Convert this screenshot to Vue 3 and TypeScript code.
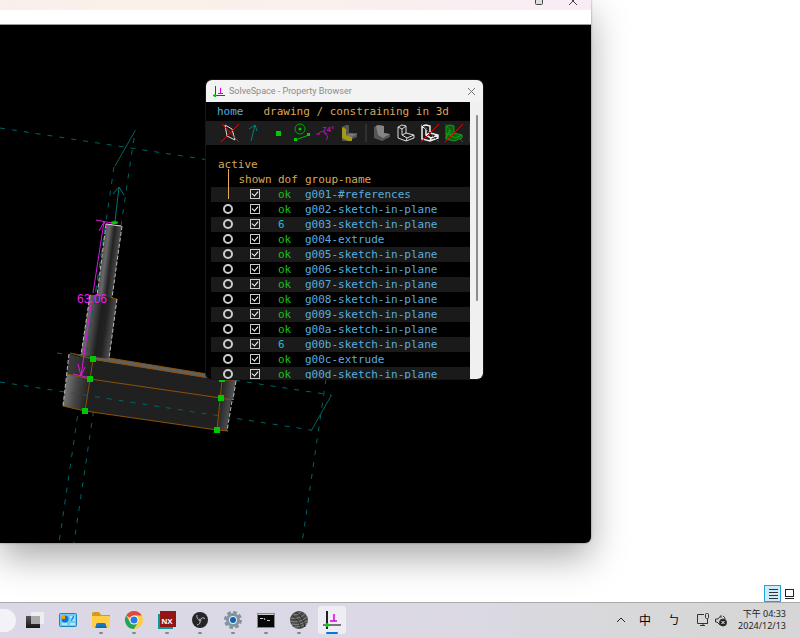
<script setup lang="ts">
import { ref } from 'vue'

interface Group {
  id: string
  dof: string
  shown: boolean
}

const groups = ref<Group[]>([
  { id: 'g001-#references', dof: 'ok', shown: true },
  { id: 'g002-sketch-in-plane', dof: 'ok', shown: true },
  { id: 'g003-sketch-in-plane', dof: '6', shown: true },
  { id: 'g004-extrude', dof: 'ok', shown: true },
  { id: 'g005-sketch-in-plane', dof: 'ok', shown: true },
  { id: 'g006-sketch-in-plane', dof: 'ok', shown: true },
  { id: 'g007-sketch-in-plane', dof: 'ok', shown: true },
  { id: 'g008-sketch-in-plane', dof: 'ok', shown: true },
  { id: 'g009-sketch-in-plane', dof: 'ok', shown: true },
  { id: 'g00a-sketch-in-plane', dof: 'ok', shown: true },
  { id: 'g00b-sketch-in-plane', dof: '6', shown: true },
  { id: 'g00c-extrude', dof: 'ok', shown: true },
  { id: 'g00d-sketch-in-plane', dof: 'ok', shown: true },
])

const active = ref('')

const handles: [number, number][] = [
  [93, 359],
  [90, 379],
  [85, 411],
  [222, 379],
  [221, 398],
  [217, 430],
]
</script>

<template>
  <div class="desktop">
    <main class="workspace">
      <section class="cad">
        <header class="cad-title">
          <button class="cap" aria-label="Maximize">
            <svg width="10" height="10" viewBox="0 0 10 10"><rect x="1.500" y="1.500" width="7" height="7" rx="1" fill="#ddd" stroke="#444" /></svg>
          </button>
          <button class="cap" aria-label="Close">
            <svg width="10" height="10" viewBox="0 0 10 10"><path d="M1 1L9 9M9 1L1 9" stroke="#444" /></svg>
          </button>
        </header>
        <div class="cad-menu"></div>
        <svg class="scene" viewBox="0 25 591 518" preserveAspectRatio="xMinYMin slice">
          <defs>
            <linearGradient id="shaftA" gradientUnits="userSpaceOnUse" x1="101" y1="260" x2="117" y2="262">
              <stop offset="0" stop-color="#505050" /><stop offset=".25" stop-color="#686868" />
              <stop offset=".6" stop-color="#222" /><stop offset="1" stop-color="#4c4c4c" />
            </linearGradient>
            <linearGradient id="shaftB" gradientUnits="userSpaceOnUse" x1="85" y1="326" x2="113" y2="330">
              <stop offset="0" stop-color="#6a6a6a" /><stop offset=".25" stop-color="#484848" />
              <stop offset=".5" stop-color="#1e1e1e" /><stop offset=".7" stop-color="#222" /><stop offset="1" stop-color="#505050" />
            </linearGradient>
            <linearGradient id="endTop" gradientUnits="userSpaceOnUse" x1="68" y1="362" x2="92" y2="366">
              <stop offset="0" stop-color="#3c3c3c" /><stop offset="1" stop-color="#222" />
            </linearGradient>
            <linearGradient id="endLow" gradientUnits="userSpaceOnUse" x1="64" y1="390" x2="88" y2="394">
              <stop offset="0" stop-color="#787878" /><stop offset=".5" stop-color="#454545" /><stop offset="1" stop-color="#222" />
            </linearGradient>
            <linearGradient id="endRight" gradientUnits="userSpaceOnUse" x1="219" y1="400" x2="233" y2="402">
              <stop offset="0" stop-color="#202020" /><stop offset="1" stop-color="#555" />
            </linearGradient>
          </defs>

          <g class="datum dashed">
            <path d="M0 128L300 174" />
            <path d="M57 353L331 395" />
            <path d="M326 379L302 543" />
            <path d="M114 167L59 543" />
            <path d="M134 138L74 543" />
          </g>
          <g class="datum">
            <path d="M135.500 130L115 166M331.500 395L311 431" />
          </g>

          <path d="M69 354L93 360L90 379L67 374Z" fill="url(#endTop)" />
          <path d="M67 374L90 379L85 411L63 406Z" fill="url(#endLow)" />
          <path d="M93 360L222 380L217 430L85 411Z" fill="#202020" />
          <path d="M222 379L236 380L233 400L231 400L227 431L217 430Z" fill="url(#endRight)" />
          <path d="M70 353L109 358L207 374L207 378L93 360Z" fill="#606060" />
          <path d="M70 353L96 357L93 360Z" fill="#333" />
          <path d="M90 295L117 299L109 359L81 355Z" fill="url(#shaftB)" />
          <path d="M106 224L122 226L112 298L97 296Z" fill="url(#shaftA)" />

          <path class="edge" d="M70 353L93 359L222 380H236M109 358L207 374M67 374L90 379L221 398L232 400M63 406L85 411L217 430L228 431M93 360L85 411M222 380L217 430M90 295L97 296M112 298L117 299" />
          <path class="rim" d="M106 224L97 296M122 226L112 298M117 299L109 359M90 295L81 355M69 354L63 406M236 381L233 400M232 401L227 431" />
          <path d="M106 224L121 226" stroke="#ddd" />
          <path class="datum dashed" d="M105 228L86 358M0 382L311 430" />
          <path class="datum arrow" d="M115 221L119 187M113 194L119 187L124 195" />

          <g class="dim">
            <path d="M96 220L112 223M104 222L93 293M99 231L104 222L108 229" />
            <path d="M91 305L81 376M78 364L81 376L85 367M73 374L91 378" />
            <text x="77" y="303">63.06</text>
          </g>
          <ellipse cx="114.500" cy="222.500" rx="3.500" ry="1.500" fill="#0c0" />
          <rect v-for="(p, i) in handles" :key="i" :x="p[0] - 3" :y="p[1] - 3" width="6" height="6" fill="#00c800" />
        </svg>
      </section>

      <div class="viewbar">
        <button class="view selected" aria-label="Details view">
          <svg width="16" height="16" viewBox="0 0 16 16"><path d="M4 3.500H13M4 6.500H13M4 9.500H13M4 12.500H13" stroke="#333" /></svg>
        </button>
        <button class="view" aria-label="Large icons view">
          <svg width="16" height="16" viewBox="0 0 16 16"><rect x="3.500" y="3.500" width="8" height="7" fill="#fff" stroke="#222" /><path d="M3 12.500H12" stroke="#222" /></svg>
        </button>
      </div>

      <section class="browser">
        <header class="browser-title">
          <svg width="13" height="13" viewBox="0 0 13 13">
            <path d="M3.500 1V12M1 10.500H13" stroke="#444" fill="none" />
            <path d="M8.500 3V8M6 8.500H11" stroke="#d0d" fill="none" /><circle cx="3" cy="10.500" r="1.500" fill="#0c0" />
          </svg>
          <span>SolveSpace - Property Browser</span>
          <button class="close" aria-label="Close browser">
            <svg width="9" height="9" viewBox="0 0 9 9"><path d="M1 1L8 8M8 1L1 8" stroke="#777" /></svg>
          </button>
        </header>
        <div class="browser-body">
          <div class="content">
            <nav class="crumbs">
              <a href="#home">home</a><span>drawing / constraining in 3d</span>
            </nav>
            <div class="tools">
              <button aria-label="Workplanes">
                <svg viewBox="0 0 24 24"><path d="M7 4L14 8L17 19L9 15Z" stroke="#ddd" /><path d="M3 21L21 3M4 3L21 21" class="cross" /></svg>
              </button>
              <button aria-label="Normals">
                <svg viewBox="0 0 24 24"><path d="M9 20L13 4M7 8L13 4L15 10" stroke="#007f7f" /></svg>
              </button>
              <button aria-label="Points">
                <svg viewBox="0 0 24 24"><rect x="10" y="10" width="5" height="5" fill="#0c0" /></svg>
              </button>
              <button aria-label="Construction">
                <svg viewBox="0 0 24 24"><circle cx="10" cy="8" r="5" stroke="#0a0" /><circle cx="10" cy="8" r="1.500" fill="#0c0" /><path d="M5 19L19 14" stroke="#0b0" /><rect x="4" y="17" width="3" height="3" fill="#0c0" /><rect x="17" y="12" width="3" height="3" fill="#0c0" /></svg>
              </button>
              <button aria-label="Constraints">
                <svg viewBox="0 0 24 24"><path d="M4 13Q8 8 13 13M10 12Q16 15 12 19M2 13H6" stroke="#c0c" /><text x="8" y="11" class="angle">74°</text></svg>
              </button>
              <button aria-label="Faces">
                <svg viewBox="0 0 24 24"><path d="M4 6L8 4H11V13L19 12V16L10 20H4Z" fill="#555" /><path d="M4 6L8 8V14L14 16V20H10L4 17Z" fill="#a39a10" /><path d="M8 14L12 12L19 13L14 16Z" fill="#777" /></svg>
              </button>
              <i class="split"></i>
              <button aria-label="Shaded">
                <svg viewBox="0 0 24 24"><path d="M4 6L8 4L14 5V12L20 13V16L12 20L4 17Z" fill="#555" /><path d="M6 5L8 4L14 5V12L20 13L13 17L8 14Z" fill="#858585" /></svg>
              </button>
              <button aria-label="Edges">
                <svg viewBox="0 0 24 24"><path d="M4 6L8 4L12 5V12L20 14V17L12 20L4 17ZM4 6L8 8V14L13 17L12 20M8 8L12 5M8 14L12 12M13 17L20 14" stroke="#ddd" /></svg>
              </button>
              <button aria-label="Mesh">
                <svg viewBox="0 0 24 24"><path class="heavy" d="M4 5L8 4L12 5V12L20 14V17L12 20L4 18ZM4 5L8 8V14L13 17L12 20M8 14L12 12M13 17L20 14" stroke="#eee" /><path d="M3 21L21 3M3 3L21 21" class="cross" /></svg>
              </button>
              <button aria-label="Hidden lines">
                <svg viewBox="0 0 24 24"><path d="M4 5L8 4L12 5V12L20 14V17L12 20L4 18Z" fill="#0a610a" /><path d="M4 5L8 4L12 5V12L20 14V17L12 20L4 18ZM4 5L8 8V14L13 17M4 18L8 8L12 12L8 14L4 12M13 17L20 14" stroke="#14a014" /><path d="M3 21L21 3M3 3L21 21" class="cross" /></svg>
              </button>
              <i class="split"></i>
            </div>
            <table class="groups">
              <colgroup><col class="c-active" /><col class="c-shown" /><col class="c-dof" /><col /></colgroup>
              <thead>
                <tr><th colspan="4" class="h-active">active</th></tr>
                <tr><th></th><th class="h-shown">shown</th><th class="dof">dof</th><th>group-name</th></tr>
              </thead>
              <tbody>
                <tr v-for="(g, i) in groups" :key="g.id">
                  <td class="pick"><input v-if="i > 0" v-model="active" type="radio" name="active" :value="g.id" :aria-label="'Activate ' + g.id" /></td>
                  <td class="show"><input v-model="g.shown" type="checkbox" :aria-label="'Show ' + g.id" /></td>
                  <td class="dof" :class="g.dof === 'ok' ? 'ok' : 'free'">{{ g.dof }}</td>
                  <td><a :href="'#' + g.id">{{ g.id }}</a></td>
                </tr>
              </tbody>
            </table>
          </div>
          <div class="track"><div class="thumb"></div></div>
        </div>
      </section>
    </main>

    <footer class="taskbar">
      <div class="search"></div>
      <div class="apps">
        <button aria-label="Task view">
          <svg viewBox="0 0 20 20"><defs><linearGradient id="tv" x2="0" y2="1"><stop stop-color="#555" /><stop offset="1" stop-color="#151515" /></linearGradient></defs><rect x="1" y="6" width="14" height="12" fill="url(#tv)" /><rect x="6" y="2" width="13" height="12" fill="#eee" /><rect x="6" y="6" width="9" height="8" fill="#aaa" /></svg>
        </button>
        <button aria-label="Control panel">
          <svg viewBox="0 0 20 20"><rect x="1.500" y="3.500" width="17" height="13" rx="1" fill="#6cccf5" stroke="#1688c0" /><circle cx="7" cy="9" r="3.500" fill="#1673c5" /><path d="M7 9V5A4 4 0 0 0 3 9Z" fill="#f59b18" /><path d="M12 7H14M16 7H17M12 10H13M15 10H17M4 14H9M12 14H17" stroke="#fff" /><path d="M13 11L16 6" stroke="#1673c5" /></svg>
        </button>
        <button class="running" aria-label="File Explorer">
          <svg viewBox="0 0 20 20"><path d="M1 4Q1 2 3 2H8L10 5H19V17H1Z" fill="#d99a13" /><rect x="1" y="6" width="18" height="12" rx="1" fill="#ffcf48" /><path d="M5 18V15Q5 13 7 13H13Q15 13 15 15V18Z" fill="#1478c8" /><path d="M4 17H16" stroke="#0b5da3" /></svg>
        </button>
        <button class="running" aria-label="Chrome">
          <svg viewBox="0 0 20 20"><circle cx="10" cy="10" r="9" fill="#ffcd40" /><path d="M10 10L2.200 5.500A9 9 0 0 1 17.800 5.500H10Z" fill="#df4a3c" /><path d="M2.200 5.500A9 9 0 0 0 10 19L14 12L10 14L6 12Z" fill="#24a35a" /><circle cx="10" cy="10" r="4.500" fill="#fff" /><circle cx="10" cy="10" r="3.500" fill="#2878e8" /></svg>
        </button>
        <button class="running" aria-label="NX">
          <svg viewBox="0 0 20 20"><rect x="1" y="4" width="15" height="15" fill="#0a9a96" /><rect x="3" y="1" width="16" height="16" fill="#941515" /><text x="10" y="14" class="nx">NX</text></svg>
        </button>
        <button class="running" aria-label="OBS">
          <svg viewBox="0 0 20 20"><circle cx="10" cy="10" r="8" fill="#262528" /><path d="M10 10Q6 9 7 5M10 10Q13 6 15 9M10 10Q11 14 7 15" fill="none" stroke="#bbb" /><circle cx="10" cy="10" r="1.500" fill="#999" /></svg>
        </button>
        <button class="running" aria-label="Settings">
          <svg viewBox="0 0 20 20"><circle cx="10" cy="10" r="7.500" fill="none" stroke="#7f929f" stroke-width="3" stroke-dasharray="3.500 2.390" /><circle cx="10" cy="10" r="7" fill="#84959f" /><circle cx="10" cy="10" r="4" fill="#e8eef2" /><circle cx="10" cy="10" r="3" fill="#1262b2" /></svg>
        </button>
        <button class="running" aria-label="Terminal">
          <svg viewBox="0 0 20 20"><rect x="1.500" y="3.500" width="17" height="14" fill="#080808" stroke="#888" /><path d="M2 4.500H18" stroke="#ccc" /><path d="M4 8.500H7M8 8L9 10M11 10.500H14" stroke="#ccc" /></svg>
        </button>
        <button class="running" aria-label="Sphere">
          <svg viewBox="0 0 20 20"><circle cx="10" cy="10" r="9" fill="#484848" /><path d="M2 8Q9 10 16 4M3 5Q8 6 12 2M1 11Q10 14 18 7M3 14Q11 16 19 10M5 17Q12 18 18 13" fill="none" stroke="#888" /><path d="M7 2Q15 8 16 17M3 5Q10 10 12 18" fill="none" stroke="#333" /></svg>
        </button>
        <button class="running current" aria-label="SolveSpace">
          <svg viewBox="0 0 20 20"><path d="M5 1V19" stroke="#222" stroke-width="2" /><path d="M1 15H19" stroke="#777" stroke-width="2" /><path d="M12 4V11M8 11H15" stroke="#d0d" stroke-width="1.500" /><circle cx="5" cy="15" r="2" fill="#12cc12" /></svg>
        </button>
      </div>
      <div class="tray">
        <button class="chev" aria-label="Hidden icons"><svg width="10" height="10" viewBox="0 0 10 10"><path d="M1 7L5 3L9 7" stroke="#222" fill="none" /></svg></button>
        <button class="ime">中</button>
        <button class="ime bopo">ㄅ</button>
        <button class="net" aria-label="Network and sound">
          <svg width="32" height="16" viewBox="0 0 32 16" fill="none" stroke="#333">
            <path d="M8 2.500H1.500V11.500H11.500V8M4 13.500H9M7 11V13" /><rect x="9.500" y="1.500" width="3" height="5" rx="1" /><path d="M11.500 7V12" />
            <path d="M19.500 7H22L25 3.500V6M19.500 7V10H21L24 13M27 4Q29 5 29 7" /><circle cx="27" cy="10.500" r="3.500" fill="#222" /><path d="M25.500 9L28.500 12M28.500 9L25.500 12" stroke="#fff" />
          </svg>
        </button>
        <time class="clock" datetime="2024-12-13T16:33"><span>下午 04:33</span><span>2024/12/13</span></time>
      </div>
    </footer>
  </div>
</template>

<style>
body {
  margin: 0;
  background: #fff;
}
</style>

<style scoped>
.desktop {
  display: flex;
  flex-direction: column;
  height: 100vh;
  overflow: hidden;
  font-family: "Noto Sans", "Noto Sans CJK TC", sans-serif;
}
button {
  padding: 0;
  border: 0;
  background: none;
  font: inherit;
}
svg {
  display: block;
}
a {
  color: #57addf;
  text-decoration: none;
}
.workspace {
  position: relative;
  flex: 1;
  min-height: 0;
  display: flex;
  flex-direction: column;
}
.cad {
  flex: 1;
  min-height: 0;
  display: flex;
  flex-direction: column;
  margin-right: 209px;
  border-radius: 0 0 6px 0;
  overflow: hidden;
  background: #000;
  box-shadow: 0 14px 36px rgba(0, 0, 0, 0.35), 0 0 2px rgba(0, 0, 0, 0.5);
}
.cad-title {
  height: 10px;
  display: flex;
  justify-content: flex-end;
  align-items: flex-end;
  gap: 24px;
  padding-right: 13px;
  background: linear-gradient(90deg, #faeeee, #faf1e9 20%, #faf0ec 50%, #f8edf5);
}
.cap {
  height: 19px;
}
.cad-menu {
  height: 14px;
  background: #fff;
  border-bottom: 1px solid #999;
}
.scene {
  flex: 1;
  min-height: 0;
  width: 100%;
}
.datum {
  fill: none;
  stroke: #006464;
}
.dashed {
  stroke-dasharray: 5 7;
}
.arrow {
  stroke: #007575;
}
.edge {
  fill: none;
  stroke: #8c5208;
}
.rim {
  fill: none;
  stroke: #bbb;
  stroke-dasharray: 4 2;
}
.dim {
  fill: none;
  stroke: #e015e0;
}
.dim text {
  font: 12px "Liberation Sans", sans-serif;
  fill: #f01cf0;
  stroke: none;
}
.viewbar {
  height: 59px;
  display: flex;
  justify-content: flex-end;
  align-items: flex-end;
  padding-right: 3px;
}
.view {
  border: 1px solid transparent;
  width: 16px;
  height: 17px;
  box-sizing: border-box;
  display: grid;
  place-items: center;
}
.selected {
  width: 17px;
  border-color: #26a0da;
  background: #cdeaf8;
}
.browser {
  position: absolute;
  left: 206px;
  top: 80px;
  width: 277px;
  height: 299px;
  display: flex;
  flex-direction: column;
  overflow: hidden;
  border-radius: 6px;
  background: #000;
  box-shadow: 0 0 0 1px #151515;
}
.browser-title {
  flex: none;
  height: 22px;
  display: flex;
  align-items: center;
  gap: 4px;
  padding: 0 7px 0 6px;
  background: #f3f3f3;
  color: #8a8a8a;
  font: 9px Roboto, sans-serif;
}
.close {
  margin-left: auto;
}
.browser-body {
  flex: 1;
  min-height: 0;
  display: flex;
}
.content {
  flex: 1;
  overflow: hidden;
  color: #dba656;
  font: 11px/15px "DejaVu Sans Mono", monospace;
}
.crumbs {
  display: flex;
  gap: 20px;
  padding: 2px 11px;
}
.tools {
  display: flex;
  height: 24px;
  padding-left: 12px;
  background: #1d1d1d;
}
.tools button {
  flex: none;
  width: 24px;
  height: 24px;
}
.tools svg {
  fill: none;
}
.tools .angle {
  font: 8px "Liberation Sans", sans-serif;
  fill: #e015e0;
}
.cross {
  stroke: #c81414;
}
.heavy {
  stroke-width: 1.5;
}
.split {
  flex: none;
  width: 2px;
  height: 18px;
  margin: 3px;
  background: #303030;
}
.groups {
  width: calc(100% - 5px);
  margin: 12px 0 0 5px;
  table-layout: fixed;
  border-collapse: collapse;
}
.c-active {
  width: 27px;
}
.c-shown {
  width: 34px;
}
.c-dof {
  width: 33px;
}
.groups th,
.groups td {
  height: 15px;
  padding: 0;
  font-weight: normal;
  text-align: left;
  white-space: nowrap;
}
.groups .h-active {
  position: relative;
  padding-left: 7px;
}
.h-active::after {
  content: "";
  position: absolute;
  left: 17px;
  top: 12px;
  width: 1px;
  height: 30px;
  background: #e3ac58;
}
.groups .h-shown,
.groups .show {
  text-align: center;
}
.groups .dof {
  padding-left: 6px;
}
.groups tbody tr:nth-child(odd) {
  background: #1a1a1a;
}
.groups .pick {
  padding-left: 12px;
}
.groups .ok {
  color: #18c018;
}
.groups .free {
  color: #12c0c0;
}
.groups input {
  appearance: none;
  display: block;
  position: relative;
  box-sizing: border-box;
  width: 10px;
  height: 10px;
  margin: 0 0 2px;
  border: 2px solid #ccc;
  border-radius: 50%;
}
.groups input[type="checkbox"] {
  margin: 0 auto 2px;
  border-width: 1px;
  border-radius: 0;
}
.groups input:checked::after {
  content: "";
  position: absolute;
  left: 2px;
  top: 0;
  width: 3px;
  height: 5px;
  border: solid #fff;
  border-width: 0 1px 1px 0;
  transform: rotate(40deg);
}
.track {
  width: 13px;
  box-sizing: border-box;
  padding: 13px 5px 0 6px;
  background: #f0f0f0;
}
.thumb {
  height: 186px;
  border-radius: 1px;
  background: #8c8c8c;
}
.taskbar {
  position: relative;
  z-index: 1;
  flex: none;
  height: 36px;
  box-sizing: border-box;
  display: flex;
  align-items: center;
  padding-bottom: 1px;
  border-top: 1px solid #aaa;
  background: linear-gradient(90deg, #dbd7e6, #dcd9e5 50%, #d8d8da 80%, #d6d6d6);
}
.search {
  width: 16px;
  height: 23px;
  border-radius: 0 12px 12px 0;
  background: #f3f2f7;
}
.apps {
  display: flex;
  gap: 5px;
  padding-left: 5px;
}
.apps button {
  position: relative;
  width: 28px;
  height: 28px;
  border-radius: 3px;
}
.apps svg {
  width: 20px;
  height: 20px;
  margin: 0 auto;
}
.running::after {
  content: "";
  position: absolute;
  left: 12px;
  bottom: 0;
  width: 4px;
  height: 2px;
  border-radius: 1px;
  background: #888;
}
.current {
  background: #efedf4;
}
.current::after {
  left: 8px;
  width: 12px;
  background: #0878d8;
}
.nx {
  font: bold 8px "Liberation Sans", sans-serif;
  fill: #fff;
  text-anchor: middle;
}
.tray {
  margin-left: auto;
  display: flex;
  align-items: center;
  padding-right: 14px;
  color: #222;
}
.ime {
  margin-left: 13px;
  font: 12px/16px "Noto Sans CJK TC", sans-serif;
}
.bopo {
  margin-left: 17px;
}
.net {
  margin-left: 16px;
}
.clock {
  display: flex;
  flex-direction: column;
  align-items: flex-end;
  margin-left: 10px;
  font-size: 9px;
  line-height: 12px;
}
</style>
